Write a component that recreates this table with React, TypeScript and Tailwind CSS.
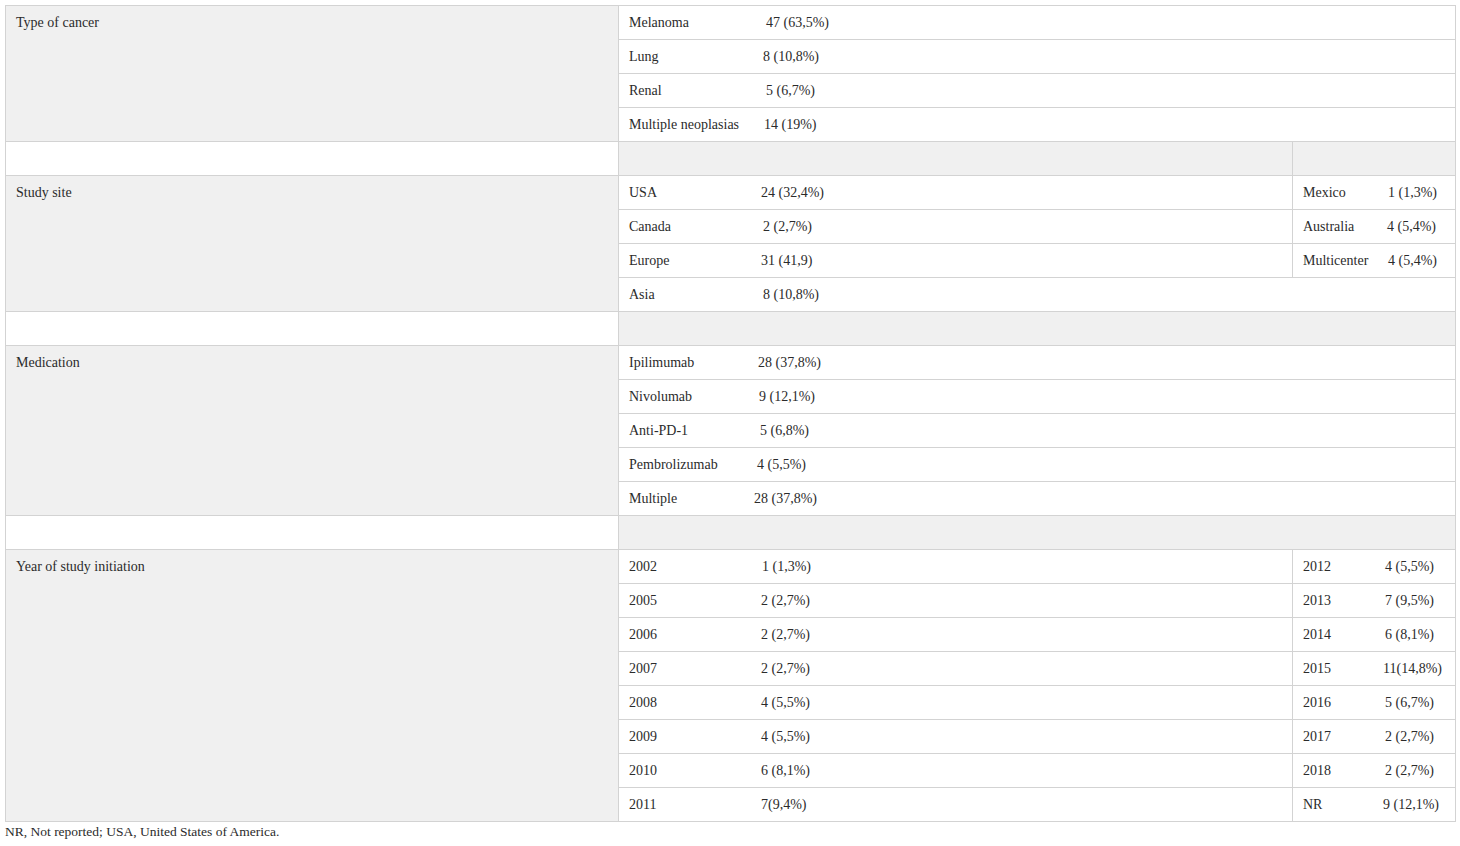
import React from "react";

type Item = { name: string; value: string; w: string };

const cell = "border border-[#d3d3d3] align-top px-[10px] pt-[8px] pb-0 h-[34px]";

function Entry({ it }: { it: Item }) {
  return (
    <div className="flex whitespace-nowrap">
      <span className={`inline-block ${it.w}`}>{it.name}</span>
      <span>{it.value}</span>
    </div>
  );
}

const cancer: Item[] = [
  { name: "Melanoma", value: "47 (63,5%)", w: "w-[137px]" },
  { name: "Lung", value: "8 (10,8%)", w: "w-[134px]" },
  { name: "Renal", value: "5 (6,7%)", w: "w-[137px]" },
  { name: "Multiple neoplasias", value: "14 (19%)", w: "w-[135px]" },
];

const site: [Item, Item | null][] = [
  [
    { name: "USA", value: "24 (32,4%)", w: "w-[132px]" },
    { name: "Mexico", value: "1 (1,3%)", w: "w-[85px]" },
  ],
  [
    { name: "Canada", value: "2 (2,7%)", w: "w-[134px]" },
    { name: "Australia", value: "4 (5,4%)", w: "w-[84px]" },
  ],
  [
    { name: "Europe", value: "31 (41,9)", w: "w-[132px]" },
    { name: "Multicenter", value: "4 (5,4%)", w: "w-[85px]" },
  ],
  [{ name: "Asia", value: "8 (10,8%)", w: "w-[134px]" }, null],
];

const meds: Item[] = [
  { name: "Ipilimumab", value: "28 (37,8%)", w: "w-[129px]" },
  { name: "Nivolumab", value: "9 (12,1%)", w: "w-[130px]" },
  { name: "Anti-PD-1", value: "5 (6,8%)", w: "w-[131px]" },
  { name: "Pembrolizumab", value: "4 (5,5%)", w: "w-[128px]" },
  { name: "Multiple", value: "28 (37,8%)", w: "w-[125px]" },
];

const years: [Item, Item][] = [
  [
    { name: "2002", value: "1 (1,3%)", w: "w-[133px]" },
    { name: "2012", value: "4 (5,5%)", w: "w-[82px]" },
  ],
  [
    { name: "2005", value: "2 (2,7%)", w: "w-[132px]" },
    { name: "2013", value: "7 (9,5%)", w: "w-[82px]" },
  ],
  [
    { name: "2006", value: "2 (2,7%)", w: "w-[132px]" },
    { name: "2014", value: "6 (8,1%)", w: "w-[82px]" },
  ],
  [
    { name: "2007", value: "2 (2,7%)", w: "w-[132px]" },
    { name: "2015", value: "11(14,8%)", w: "w-[80px]" },
  ],
  [
    { name: "2008", value: "4 (5,5%)", w: "w-[132px]" },
    { name: "2016", value: "5 (6,7%)", w: "w-[82px]" },
  ],
  [
    { name: "2009", value: "4 (5,5%)", w: "w-[132px]" },
    { name: "2017", value: "2 (2,7%)", w: "w-[82px]" },
  ],
  [
    { name: "2010", value: "6 (8,1%)", w: "w-[132px]" },
    { name: "2018", value: "2 (2,7%)", w: "w-[82px]" },
  ],
  [
    { name: "2011", value: "7(9,4%)", w: "w-[132px]" },
    { name: "NR", value: "9 (12,1%)", w: "w-[80px]" },
  ],
];

export default function App() {
  return (
    <div className="bg-white min-h-[846px] pt-[5px] pl-[5px] text-[14px] leading-[18px] text-[#2b2b2b] font-['Liberation_Serif',serif]">
      <table className="border-collapse table-fixed w-[1450px]">
        <colgroup>
          <col className="w-[613px]" />
          <col className="w-[674px]" />
          <col className="w-[163px]" />
        </colgroup>
        <tbody>
          {cancer.map((it, i) => (
            <tr key={it.name}>
              {i === 0 && (
                <td rowSpan={4} className={`${cell} bg-[#f0f0f0]`}>
                  Type of cancer
                </td>
              )}
              <td colSpan={2} className={cell}>
                <Entry it={it} />
              </td>
            </tr>
          ))}
          <tr>
            <td className={cell}></td>
            <td className={`${cell} bg-[#f0f0f0]`}></td>
            <td className={`${cell} bg-[#f0f0f0]`}></td>
          </tr>
          {site.map(([a, b], i) => (
            <tr key={a.name}>
              {i === 0 && (
                <td rowSpan={4} className={`${cell} bg-[#f0f0f0]`}>
                  Study site
                </td>
              )}
              {b ? (
                <>
                  <td className={cell}>
                    <Entry it={a} />
                  </td>
                  <td className={cell}>
                    <Entry it={b} />
                  </td>
                </>
              ) : (
                <td colSpan={2} className={cell}>
                  <Entry it={a} />
                </td>
              )}
            </tr>
          ))}
          <tr>
            <td className={cell}></td>
            <td colSpan={2} className={`${cell} bg-[#f0f0f0]`}></td>
          </tr>
          {meds.map((it, i) => (
            <tr key={it.name + i}>
              {i === 0 && (
                <td rowSpan={5} className={`${cell} bg-[#f0f0f0]`}>
                  Medication
                </td>
              )}
              <td colSpan={2} className={cell}>
                <Entry it={it} />
              </td>
            </tr>
          ))}
          <tr>
            <td className={cell}></td>
            <td colSpan={2} className={`${cell} bg-[#f0f0f0]`}></td>
          </tr>
          {years.map(([a, b], i) => (
            <tr key={a.name}>
              {i === 0 && (
                <td rowSpan={8} className={`${cell} bg-[#f0f0f0]`}>
                  Year of study initiation
                </td>
              )}
              <td className={cell}>
                <Entry it={a} />
              </td>
              <td className={cell}>
                <Entry it={b} />
              </td>
            </tr>
          ))}
        </tbody>
      </table>
      <p className="mt-[1px] text-[13.5px] leading-[18px]">
        NR, Not reported; USA, United States of America.
      </p>
    </div>
  );
}
